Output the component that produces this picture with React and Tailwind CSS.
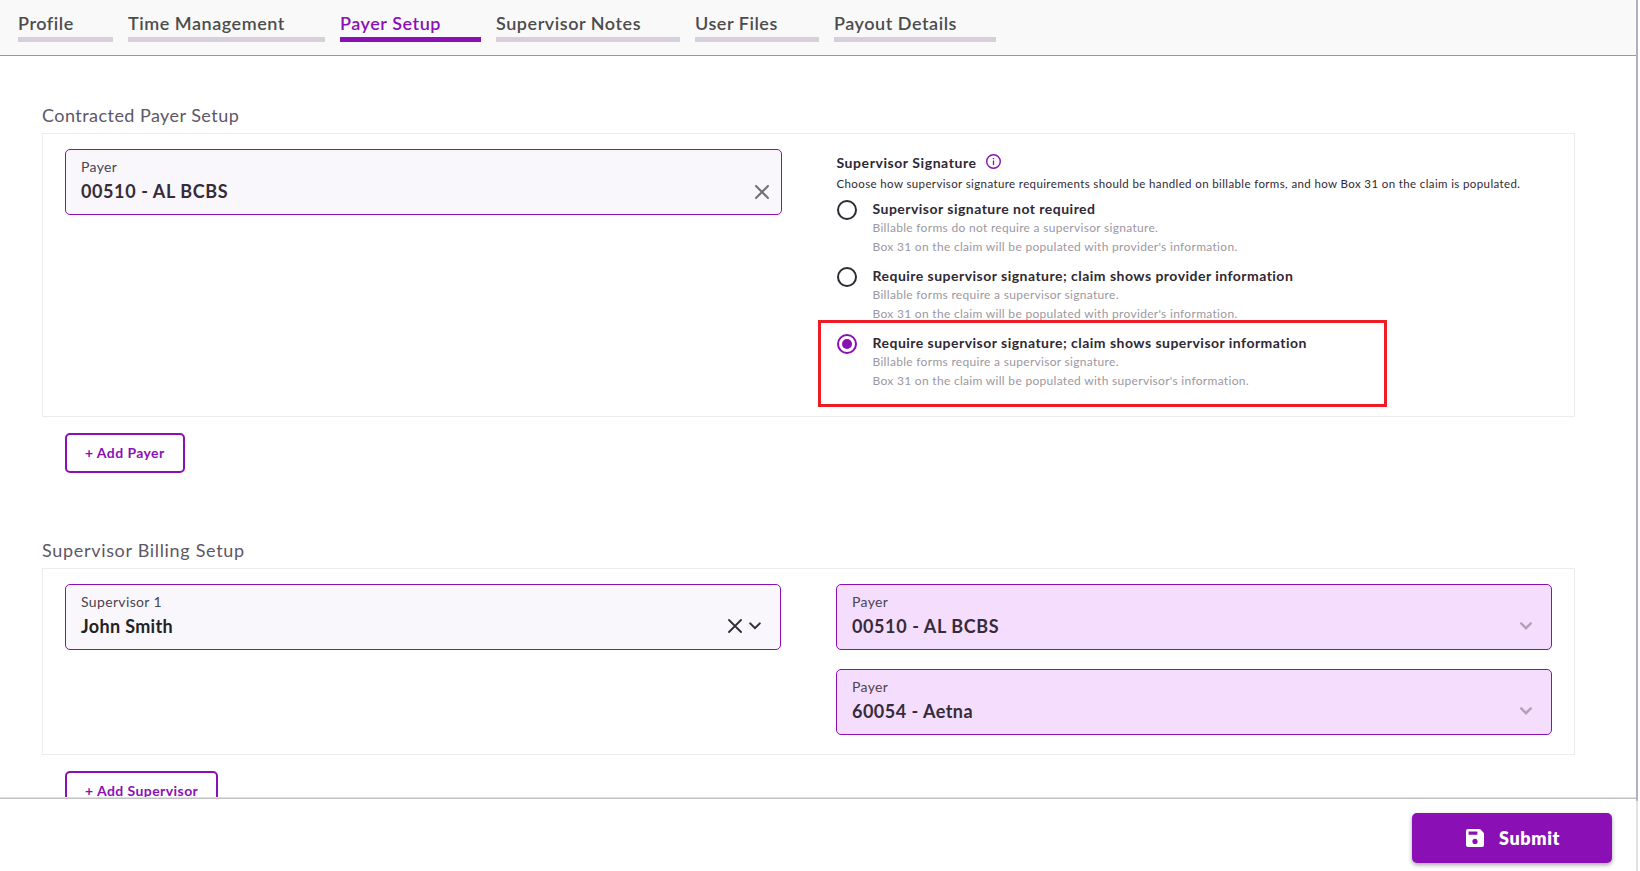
import { useState } from 'react'

const tabs = [
  { name: 'Profile', width: 'w-[95px]' },
  { name: 'Time Management', width: 'w-[197px]' },
  { name: 'Payer Setup', width: 'w-[141px]' },
  { name: 'Supervisor Notes', width: 'w-[184px]' },
  { name: 'User Files', width: 'w-[124px]' },
  { name: 'Payout Details', width: 'w-[162px]' },
]

const options = [
  {
    id: 'none',
    title: 'Supervisor signature not required',
    lines: [
      'Billable forms do not require a supervisor signature.',
      "Box 31 on the claim will be populated with provider's information.",
    ],
  },
  {
    id: 'provider',
    title: 'Require supervisor signature; claim shows provider information',
    lines: [
      'Billable forms require a supervisor signature.',
      "Box 31 on the claim will be populated with provider's information.",
    ],
  },
  {
    id: 'supervisor',
    title: 'Require supervisor signature; claim shows supervisor information',
    lines: [
      'Billable forms require a supervisor signature.',
      "Box 31 on the claim will be populated with supervisor's information.",
    ],
  },
]

function CloseIcon({ className }) {
  return (
    <svg className={className} width="14" height="14" viewBox="0 0 14 14" fill="none" stroke="currentColor" strokeLinecap="round">
      <path d="M1 1l12 12M13 1L1 13" />
    </svg>
  )
}

function ChevronIcon({ className }) {
  return (
    <svg className={className} width="12" height="8" viewBox="0 0 12 8" fill="none" stroke="currentColor" strokeLinecap="round">
      <path d="M1.2 1.4L6 6.2l4.8-4.8" />
    </svg>
  )
}

function InfoIcon() {
  return (
    <svg width="15" height="15" viewBox="0 0 15 15" fill="none" stroke="currentColor">
      <circle cx="7.5" cy="7.5" r="6.8" strokeWidth="1.4" />
      <path d="M7.5 6.6v4.4M7.5 4v1.3" strokeWidth="1.3" />
    </svg>
  )
}

function SaveIcon() {
  return (
    <svg width="18" height="18" viewBox="0 0 18 18" fill="currentColor" fillRule="evenodd">
      <path d="M2 0h11.2c.5 0 1 .2 1.4.6l2.8 2.8c.4.4.6.9.6 1.4V16a2 2 0 0 1-2 2H2a2 2 0 0 1-2-2V2C0 .9.9 0 2 0zM2.6 2.4v3.3h8.8V2.4zM9 9.8a2.6 2.6 0 1 0 0 5.2 2.6 2.6 0 0 0 0-5.2z" />
    </svg>
  )
}

function Field({ label, value, className, valueClass, children }) {
  return (
    <div className={`flex h-[66px] justify-between rounded-[5px] border border-[#8a10b5] pl-[15px] ${className}`}>
      <div className="pt-[7px]">
        <p className="text-sm leading-5 tracking-[0.35px] text-[#4a4450]">{label}</p>
        <p className={`mt-0.5 text-lg leading-6 font-bold ${valueClass}`}>{value}</p>
      </div>
      <div className="flex items-end">{children}</div>
    </div>
  )
}

function App() {
  const [activeTab, setActiveTab] = useState('Payer Setup')
  const [signature, setSignature] = useState('supervisor')

  return (
    <div className="flex h-screen overflow-hidden bg-white pr-0.5 font-[Lato,'Open_Sans',sans-serif]">
      <div className="flex min-w-0 flex-1 flex-col">
        <nav className="flex h-14 shrink-0 gap-[15px] border-b border-[#999999] bg-[#f9f9f9] pt-[11px] pl-[18px]">
          {tabs.map((tab) => (
            <button
              key={tab.name}
              onClick={() => setActiveTab(tab.name)}
              className={`h-[31px] border-b-[5px] pb-0.5 text-left text-lg leading-6 font-semibold tracking-[0.54px] whitespace-nowrap ${tab.width} ${
                activeTab === tab.name ? 'border-[#8a10b5] text-[#8a10b5]' : 'border-[#d6d0da] text-[#4c4c4c]'
              }`}>
              {tab.name}
            </button>
          ))}
        </nav>

        <main className="min-h-0 flex-1 overflow-hidden pt-[47px] pl-[42px]">
          <h2 className="mb-1.5 text-lg leading-6 tracking-[0.45px] text-[#5e5766]">Contracted Payer Setup</h2>
          <section className="flex h-[284px] w-[1533px] gap-[54px] border border-[#ececec] pt-[15px] pl-[22px]">
            <Field
              label="Payer"
              value="00510 - AL BCBS"
              className="w-[717px] bg-[#f9f7fb]"
              valueClass="tracking-[0.6px] text-[#352c3a]">
              <CloseIcon className="mr-3 mb-[15px] stroke-2 text-[#707070]" />
            </Field>

            <div className="pt-1 text-[#2f2835]">
              <div className="flex gap-[9px] pl-[0.5px]">
                <h3 className="text-sm leading-5 font-bold tracking-[0.57px]">Supervisor Signature</h3>
                <span className="mt-[0.5px] text-[#8a10b5]">
                  <InfoIcon />
                </span>
              </div>
              <p className="mt-0.5 pl-[0.5px] text-[11.5px] leading-[18px] tracking-[0.38px] whitespace-nowrap">
                Choose how supervisor signature requirements should be handled on billable forms, and how Box 31 on the claim is populated.
              </p>

              <div className="relative mt-1.5 flex flex-col gap-2.5">
                {options.map((option) => (
                  <label key={option.id} className="flex gap-[15.5px] pl-px">
                    <input
                      type="radio"
                      name="signature"
                      className="sr-only"
                      checked={signature === option.id}
                      onChange={() => setSignature(option.id)}
                    />
                    <span
                      className={`mt-px flex size-5 items-center justify-center rounded-full border-2 ${
                        signature === option.id ? 'border-[#8a10b5]' : 'border-[#2f2835]'
                      }`}>
                      {signature === option.id && <span className="size-2.5 rounded-full bg-[#8a10b5]" />}
                    </span>
                    <span className="block whitespace-nowrap">
                      <span className="block text-sm leading-[19px] font-bold tracking-[0.475px]">{option.title}</span>
                      {option.lines.map((line) => (
                        <span key={line} className="block text-xs leading-[19px] tracking-[0.3px] text-[#9c97a1]">
                          {line}
                        </span>
                      ))}
                    </span>
                  </label>
                ))}
                {/* highlight around the supervisor information option */}
                <div className="pointer-events-none absolute top-[121px] -left-[18px] h-[87px] w-[569px] border-3 border-[#ee1c25]" />
              </div>
            </div>
          </section>

          <button className="mt-4 ml-[23px] block h-10 w-[120px] rounded-[5px] border-2 border-[#8a10b5] pl-[18px] text-left text-sm leading-5 font-bold tracking-[0.41px] text-[#8a10b5]">
            + Add Payer
          </button>

          <h2 className="mt-[65px] mb-1.5 text-lg leading-6 tracking-[0.68px] text-[#5e5766]">Supervisor Billing Setup</h2>
          <section className="flex h-[187px] w-[1533px] gap-[55px] border border-[#ececec] pt-[15px] pl-[22px]">
            <Field
              label="Supervisor 1"
              value="John Smith"
              className="w-[716px] bg-[#f9f7fb]"
              valueClass="tracking-[0.34px] text-[#222222]">
              <CloseIcon className="mr-[7px] mb-4 stroke-[1.8px] text-[#332b37]" />
              <ChevronIcon className="mr-[19px] mb-[19px] stroke-2 text-[#332b37]" />
            </Field>

            <div className="flex flex-col gap-[19px]">
              <Field
                label="Payer"
                value="00510 - AL BCBS"
                className="w-[716px] bg-[#f5ddfd]"
                valueClass="tracking-[0.6px] text-[#352c3a]">
                <ChevronIcon className="mr-[19px] mb-[19px] stroke-[2.4px] text-[#b1a1b8]" />
              </Field>
              <Field
                label="Payer"
                value="60054 - Aetna"
                className="w-[716px] bg-[#f5ddfd]"
                valueClass="tracking-[0.48px] text-[#352c3a]">
                <ChevronIcon className="mr-[19px] mb-[19px] stroke-[2.4px] text-[#b1a1b8]" />
              </Field>
            </div>
          </section>

          <button className="mt-4 ml-[23px] block h-10 w-[153px] rounded-[5px] border-2 border-[#8a10b5] pl-[18px] text-left text-sm leading-5 font-bold tracking-[0.43px] text-[#8a10b5]">
            + Add Supervisor
          </button>
        </main>

        <footer className="h-[74px] shrink-0 border-t border-[#e0e0e0]">
          <div className="flex h-full justify-end border-t border-[#c2c2c2] pt-3.5 pr-6">
            <button className="flex h-[50px] w-[200px] items-center gap-[15px] rounded-[5px] bg-[#8a10b5] pl-[54px] text-lg leading-7 font-extrabold tracking-[0.6px] text-white shadow-[0_2px_4px_rgba(0,0,0,0.35)]">
              <SaveIcon />
              Submit
            </button>
          </div>
        </footer>
      </div>

      {/* scrollbar */}
      <div className="w-0.5 bg-[#e2e2e2]">
        <div className="h-[801px] rounded-b-sm bg-[#b1afc1]" />
      </div>
    </div>
  )
}

export default App
